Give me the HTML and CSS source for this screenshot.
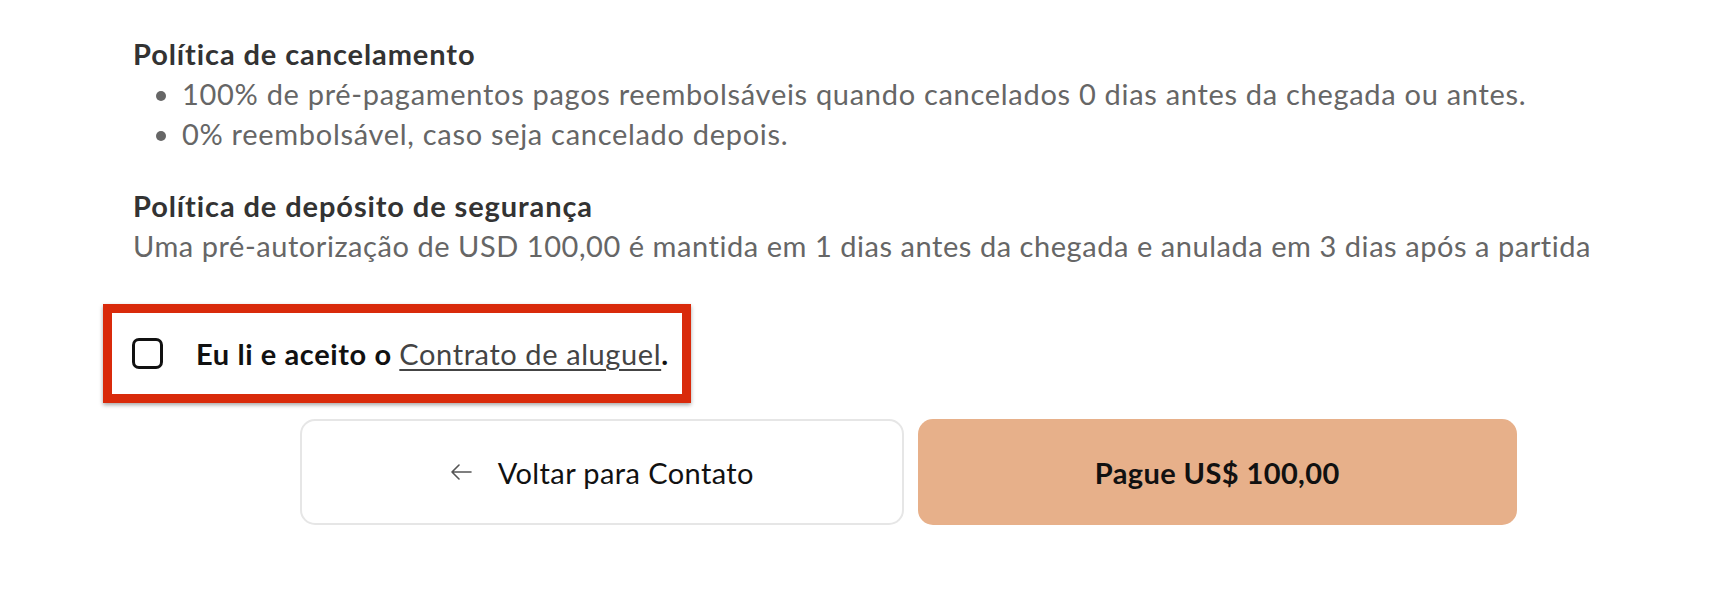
FILE: index.html
```html
<!DOCTYPE html>
<html lang="pt-BR">
<head>
<meta charset="utf-8">
<title>Pagamento</title>
<link rel="stylesheet" href="styles.css">
</head>
<body>
<main class="page">
  <section class="policy">
    <h3 class="policy-title">Política de cancelamento</h3>
    <ul class="policy-list">
      <li>100% de pré-pagamentos pagos reembolsáveis quando cancelados 0 dias antes da chegada ou antes.</li>
      <li>0% reembolsável, caso seja cancelado depois.</li>
    </ul>
  </section>
  <section class="policy policy-deposit">
    <h3 class="policy-title">Política de depósito de segurança</h3>
    <p class="policy-text">Uma pré-autorização de USD 100,00 é mantida em 1 dias antes da chegada e anulada em 3 dias após a partida</p>
  </section>
  <div class="agree-box">
    <label class="agree">
      <span class="checkbox"></span>
      <span class="agree-text">Eu li e aceito o <a class="agree-link" href="#">Contrato de aluguel</a>.</span>
    </label>
  </div>
  <div class="actions">
    <button class="btn btn-back" type="button">
      <svg class="arrow" width="22" height="16" viewBox="0 0 22 16" aria-hidden="true">
        <path d="M21 8H2M9 1L2 8l7 7" fill="none" stroke="#555" stroke-width="1.6" stroke-linecap="round" stroke-linejoin="round"/>
      </svg>
      <span>Voltar para Contato</span>
    </button>
    <button class="btn btn-pay" type="button">Pague US$ 100,00</button>
  </div>
</main>
</body>
</html>
```

FILE: styles.css
```css
html, body {
  margin: 0;
  padding: 0;
  background: #ffffff;
}

body {
  font-family: Lato, "Open Sans", sans-serif;
  font-size: 29px;
  line-height: 40px;
  letter-spacing: 0.7px;
  color: #666666;
}

.page {
  padding: 34px 0 0 133px;
}

.policy-title {
  margin: 0;
  font-size: 29px;
  line-height: 40px;
  font-weight: 700;
  letter-spacing: 0.9px;
  color: #333333;
}

.policy-list {
  margin: 0;
  padding-left: 49px;
  list-style: disc;
}

.policy-list li::marker {
  color: #666666;
}

.policy-deposit {
  margin-top: 32px;
}

.policy-text {
  margin: 0;
  letter-spacing: 0.55px;
}

.agree-box {
  display: inline-flex;
  margin: 38px 0 0 -30px;
  border: 9px solid #d92a0b;
  box-shadow: 0 2px 4px rgba(0, 0, 0, 0.35);
  padding: 0 13px 0 20px;
  height: 81px;
  align-items: center;
}

.agree {
  display: flex;
  align-items: center;
  gap: 33px;
  cursor: pointer;
}

.checkbox {
  width: 25px;
  height: 25px;
  border: 3.5px solid #111111;
  border-radius: 7px;
  flex: none;
}

.agree-text {
  font-weight: 700;
  color: #111111;
  letter-spacing: 0.6px;
}

.agree-link {
  font-weight: 400;
  color: #444444;
  text-decoration: underline;
  text-underline-offset: 4px;
  text-decoration-thickness: 1.5px;
}

.actions {
  display: flex;
  gap: 14px;
  width: 1217px;
  margin: 16px 0 0 167px;
}

.btn {
  flex: 1;
  height: 106px;
  border-radius: 15px;
  font-family: Lato, "Open Sans", sans-serif;
  font-size: 29px;
  letter-spacing: 0.4px;
  color: #111111;
  display: flex;
  align-items: center;
  justify-content: center;
  cursor: pointer;
}

.btn-back {
  background: #ffffff;
  border: 2px solid #e6e6e6;
  gap: 26px;
  font-weight: 400;
}

.btn-pay {
  background: #e7b08a;
  border: none;
  font-weight: 700;
}

.arrow {
  display: block;
}
```
